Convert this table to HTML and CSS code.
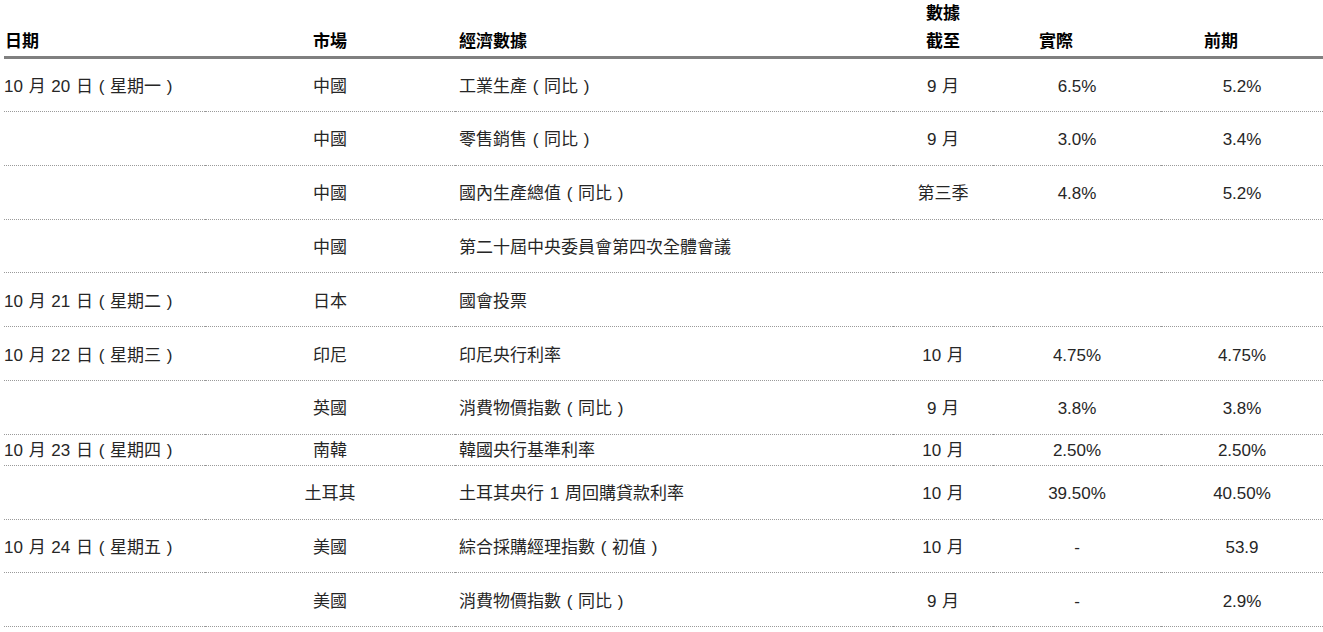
FILE: index.html
```html
<!DOCTYPE html>
<html lang="zh-Hant">
<head>
<meta charset="utf-8">
<title>經濟數據</title>
<link rel="stylesheet" href="styles.css">
</head>
<body>
<table class="cal">
  <colgroup>
    <col class="c-date"><col class="c-mkt"><col class="c-data"><col class="c-asof"><col class="c-act"><col class="c-prev">
  </colgroup>
  <thead>
    <tr>
      <th class="h-date">日期</th>
      <th class="h-mkt">市場</th>
      <th class="h-data">經濟數據</th>
      <th class="h-asof">數據<br>截至</th>
      <th class="h-num">實際</th>
      <th class="h-num">前期</th>
    </tr>
  </thead>
  <tbody>
    <tr class="first">
      <td class="date">10 月 20 日 ( 星期一 )</td><td class="mkt">中國</td><td class="data">工業生產 ( 同比 )</td><td class="ctr">9 月</td><td class="ctr">6.5%</td><td class="ctr">5.2%</td>
    </tr>
    <tr>
      <td class="date"></td><td class="mkt">中國</td><td class="data">零售銷售 ( 同比 )</td><td class="ctr">9 月</td><td class="ctr">3.0%</td><td class="ctr">3.4%</td>
    </tr>
    <tr>
      <td class="date"></td><td class="mkt">中國</td><td class="data">國內生產總值 ( 同比 )</td><td class="ctr">第三季</td><td class="ctr">4.8%</td><td class="ctr">5.2%</td>
    </tr>
    <tr>
      <td class="date"></td><td class="mkt">中國</td><td class="data">第二十屆中央委員會第四次全體會議</td><td class="ctr"></td><td class="ctr"></td><td class="ctr"></td>
    </tr>
    <tr>
      <td class="date">10 月 21 日 ( 星期二 )</td><td class="mkt">日本</td><td class="data">國會投票</td><td class="ctr"></td><td class="ctr"></td><td class="ctr"></td>
    </tr>
    <tr>
      <td class="date">10 月 22 日 ( 星期三 )</td><td class="mkt">印尼</td><td class="data">印尼央行利率</td><td class="ctr">10 月</td><td class="ctr">4.75%</td><td class="ctr">4.75%</td>
    </tr>
    <tr>
      <td class="date"></td><td class="mkt">英國</td><td class="data">消費物價指數 ( 同比 )</td><td class="ctr">9 月</td><td class="ctr">3.8%</td><td class="ctr">3.8%</td>
    </tr>
    <tr class="short">
      <td class="date">10 月 23 日 ( 星期四 )</td><td class="mkt">南韓</td><td class="data">韓國央行基準利率</td><td class="ctr">10 月</td><td class="ctr">2.50%</td><td class="ctr">2.50%</td>
    </tr>
    <tr>
      <td class="date"></td><td class="mkt">土耳其</td><td class="data">土耳其央行 1 周回購貸款利率</td><td class="ctr">10 月</td><td class="ctr">39.50%</td><td class="ctr">40.50%</td>
    </tr>
    <tr>
      <td class="date">10 月 24 日 ( 星期五 )</td><td class="mkt">美國</td><td class="data">綜合採購經理指數 ( 初值 )</td><td class="ctr">10 月</td><td class="ctr">-</td><td class="ctr">53.9</td>
    </tr>
    <tr>
      <td class="date"></td><td class="mkt">美國</td><td class="data">消費物價指數 ( 同比 )</td><td class="ctr">9 月</td><td class="ctr">-</td><td class="ctr">2.9%</td>
    </tr>
  </tbody>
</table>
</body>
</html>
```

FILE: styles.css
```css
* { box-sizing: border-box; }

html, body {
  margin: 0;
  padding: 0;
  background: #ffffff;
}

body {
  padding-left: 4px;
  font-family: "Liberation Sans", "Noto Sans CJK TC", sans-serif;
  font-size: 17px;
  color: #262626;
}

.cal {
  width: 1319px;
  table-layout: fixed;
  border-collapse: separate;
  border-spacing: 0;
}

.c-date { width: 201px; }
.c-mkt  { width: 250px; }
.c-data { width: 438px; }
.c-asof { width: 100px; }
.c-act  { width: 168px; }
.c-prev { width: 162px; }

.cal th {
  font-weight: bold;
  color: #000000;
  line-height: 28px;
  padding: 0;
  vertical-align: bottom;
  border-bottom: 3px solid #808080;
  height: 59px;
}

.cal .h-date { text-align: left; padding-left: 1px; }
.cal .h-mkt  { text-align: center; }
.cal .h-data { text-align: left; padding-left: 4px; }
.cal .h-asof { text-align: center; }
.cal .h-num  { text-align: center; padding-right: 42px; }

.cal td {
  height: 53.8px;
  padding: 4px 0 0 0;
  line-height: 22px;
  vertical-align: middle;
  border-bottom: 1px dotted #9a9a9a;
  white-space: nowrap;
  word-spacing: 1px;
}

.cal tr.first td { height: 53px; }
.cal tr.short td { height: 31px; padding-top: 2px; }

.cal .date { text-align: left; }
.cal .mkt  { text-align: center; }
.cal .data { text-align: left; padding-left: 4px; }
.cal .ctr  { text-align: center; }
```
